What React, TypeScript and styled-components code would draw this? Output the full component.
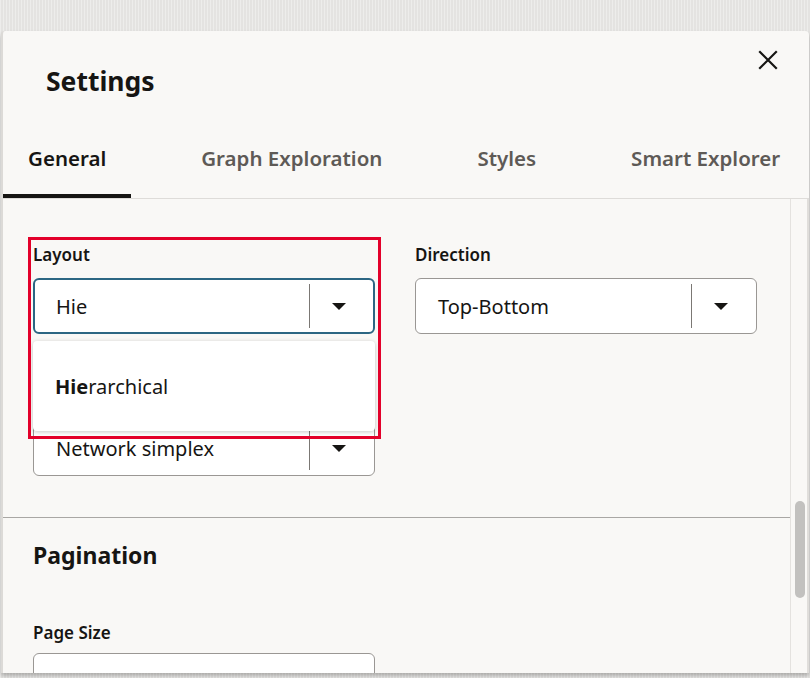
import React, { useState } from 'react';
import styled, { createGlobalStyle } from 'styled-components';

const GlobalStyle = createGlobalStyle`
  body {
    margin: 0;
    background: #e7e6e4;
    font-family: "Noto Sans", "Open Sans", sans-serif;
    color: #161513;
  }
`;

const Backdrop = styled.div`
  width: 810px;
  height: 678px;
  overflow: hidden;
  background:
    repeating-linear-gradient(90deg, rgba(255,255,255,0.35) 0 1px, transparent 1px 3px),
    #e4e3e1;
  padding-top: 31px;
  box-sizing: border-box;
`;

const Dialog = styled.div`
  width: 806px;
  height: 642px;
  margin-left: 1px;
  background: #f9f8f6;
  border-left: 2px solid #dcdad7;
  border-radius: 4px 4px 0 0;
  box-shadow: 0 3px 4px rgba(0, 0, 0, 0.25);
  display: flex;
  flex-direction: column;
  overflow: hidden;
`;

const Header = styled.div`
  display: flex;
  justify-content: space-between;
  align-items: flex-start;
  padding: 16px 28px 0 43px;
  height: 93px;
  box-sizing: border-box;
`;

const Title = styled.h2`
  margin: 16px 0 0;
  font-size: 26.5px;
  font-weight: 700;
`;

const CloseButton = styled.button`
  background: none;
  border: none;
  padding: 0;
  width: 24px;
  height: 24px;
  cursor: pointer;
  display: flex;
  align-items: center;
  justify-content: center;
  margin-top: 1px;
  margin-right: 1px;
`;

const TabBar = styled.div`
  display: flex;
  gap: 45px;
  border-bottom: 1px solid #dedcd9;
  height: 106px;
  box-sizing: border-box;
  margin-top: -31px;
  align-items: flex-end;
`;

const Tab = styled.div<{ $active?: boolean }>`
  padding: 0 25px 4px;
  height: 73px;
  display: flex;
  align-items: center;
  box-sizing: border-box;
  font-size: 20.5px;
  font-weight: 600;
  white-space: nowrap;
  color: ${p => (p.$active ? '#161513' : '#5e5a56')};
  border-bottom: 4px solid ${p => (p.$active ? '#161513' : 'transparent')};
  border-radius: 3px 3px 0 0;
`;

const Body = styled.div`
  flex: 1;
  display: flex;
  min-height: 0;
`;

const Content = styled.div`
  flex: 1;
  border-right: 1px solid #e4e2df;
  overflow: hidden;
`;

const Section = styled.div`
  padding: 44px 30px 41px;
  border-bottom: 1px solid #a9a7a4;
`;

const FieldGrid = styled.div`
  display: grid;
  grid-template-columns: 342px 342px;
  column-gap: 40px;
  row-gap: 51px;
`;

const Field = styled.div`
  position: relative;
`;

const Label = styled.div`
  font-size: 17px;
  font-weight: 600;
  height: 23px;
  line-height: 23px;
  margin-bottom: 12px;
`;

const SelectBox = styled.div<{ $focused?: boolean }>`
  height: 56px;
  box-sizing: border-box;
  background: #fff;
  border: ${p => (p.$focused ? '2px solid #2c6683' : '1px solid #9a9794')};
  border-radius: 6px;
  display: flex;
  align-items: center;
  padding-left: ${p => (p.$focused ? '21px' : '22px')};
  padding-right: ${p => (p.$focused ? '5px' : '6px')};
  font-size: 20px;
`;

const SelectText = styled.span`
  flex: 1;
`;

const Divider = styled.span`
  width: 1px;
  height: 44px;
  background: #7b7874;
`;

const Caret = styled.span`
  width: 58px;
  display: flex;
  justify-content: center;
  align-items: center;
`;

const Popup = styled.div`
  position: absolute;
  left: 0;
  top: 98px;
  width: 342px;
  height: 90px;
  background: #fff;
  border-radius: 4px;
  box-shadow: 0 1px 4px rgba(0, 0, 0, 0.22);
  display: flex;
  align-items: center;
  padding-left: 22px;
  box-sizing: border-box;
  font-size: 20px;
  z-index: 2;
`;

const Highlight = styled.b`
  font-weight: 700;
`;

const RedFrame = styled.div`
  position: absolute;
  left: -5px;
  top: -6px;
  width: 353px;
  height: 202px;
  border: 3px solid #e3002a;
  box-sizing: border-box;
  z-index: 3;
  pointer-events: none;
`;

const PaginationSection = styled.div`
  padding: 21px 30px 0;
`;

const SectionTitle = styled.h3`
  margin: 0;
  font-size: 23px;
  font-weight: 700;
  height: 32px;
  line-height: 32px;
  margin-bottom: 50px;
`;

const TextInput = styled.div`
  width: 342px;
  height: 56px;
  box-sizing: border-box;
  background: #fff;
  border: 1px solid #9a9794;
  border-radius: 6px;
  margin-top: -3px;
`;

const ScrollTrack = styled.div`
  width: 18px;
  padding: 0 4px;
  box-sizing: border-box;
  background: #f9f8f6;
  border-right: 2px solid #e0dedb;
`;

const ScrollThumb = styled.div`
  width: 10px;
  height: 97px;
  border-radius: 5px;
  background: #c2c1bf;
`;

const CaretIcon = () => (
  <svg width="14" height="7" viewBox="0 0 14 7">
    <path d="M0 0 H14 L7 7 Z" fill="#161513" />
  </svg>
);

const tabs = ['General', 'Graph Exploration', 'Styles', 'Smart Explorer'];

export default function App() {
  const [active] = useState('General');

  return (
    <>
      <GlobalStyle />
      <Backdrop>
        <Dialog>
          <Header>
            <Title>Settings</Title>
            <CloseButton aria-label="Close">
              <svg width="20" height="20" viewBox="0 0 20 20">
                <path d="M2 2 L18 18 M18 2 L2 18" stroke="#161513" strokeWidth="2.2" strokeLinecap="square" />
              </svg>
            </CloseButton>
          </Header>
          <TabBar>
            {tabs.map(t => (
              <Tab key={t} $active={t === active}>{t}</Tab>
            ))}
          </TabBar>
          <Body>
            <Content>
              <Section>
                <FieldGrid>
                  <Field>
                    <RedFrame />
                    <Label>Layout</Label>
                    <SelectBox $focused>
                      <SelectText>Hie</SelectText>
                      <Divider />
                      <Caret><CaretIcon /></Caret>
                    </SelectBox>
                    <Popup>
                      <span><Highlight>Hie</Highlight>rarchical</span>
                    </Popup>
                  </Field>
                  <Field>
                    <Label>Direction</Label>
                    <SelectBox>
                      <SelectText>Top-Bottom</SelectText>
                      <Divider />
                      <Caret><CaretIcon /></Caret>
                    </SelectBox>
                  </Field>
                  <Field>
                    {/* label hidden under the open list in the screenshot */}
                    <Label aria-hidden="true" />
                    <SelectBox>
                      <SelectText>Network simplex</SelectText>
                      <Divider />
                      <Caret><CaretIcon /></Caret>
                    </SelectBox>
                  </Field>
                </FieldGrid>
              </Section>
              <PaginationSection>
                <SectionTitle>Pagination</SectionTitle>
                <Label>Page Size</Label>
                <TextInput />
              </PaginationSection>
            </Content>
            <ScrollTrack>
              <ScrollThumb style={{ marginTop: 302 }} />
            </ScrollTrack>
          </Body>
        </Dialog>
      </Backdrop>
    </>
  );
}
